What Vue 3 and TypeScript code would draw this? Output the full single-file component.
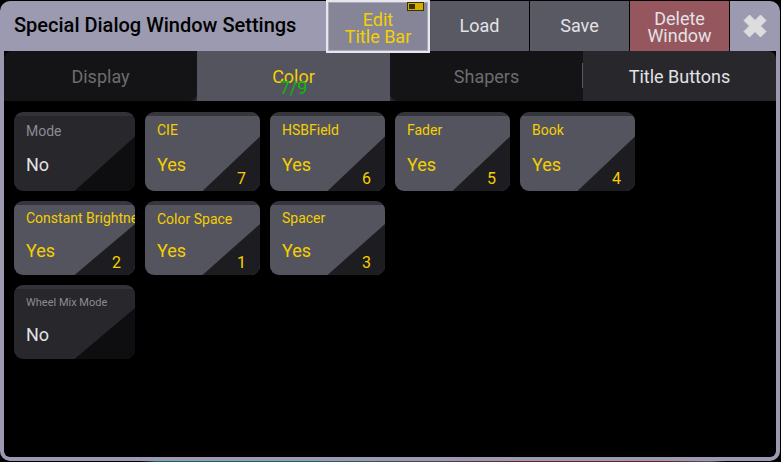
<script setup lang="ts">
import { ref } from 'vue'

interface Tab {
  label: string
  dim: boolean
  counter?: string
}

interface Setting {
  label: string
  on: boolean
  order?: number
  size?: 'medium' | 'small'
}

const tabs: Tab[] = [
  { label: 'Display', dim: true },
  { label: 'Color', dim: false, counter: '7/9' },
  { label: 'Shapers', dim: true },
  { label: 'Title Buttons', dim: false },
]
const activeTab = ref('Color')

const rows: Setting[][] = [
  [
    { label: 'Mode', on: false, size: 'medium' },
    { label: 'CIE', on: true, order: 7 },
    { label: 'HSBField', on: true, order: 6 },
    { label: 'Fader', on: true, order: 5 },
    { label: 'Book', on: true, order: 4 },
  ],
  [
    { label: 'Constant Brightness', on: true, order: 2 },
    { label: 'Color Space', on: true, order: 1, size: 'medium' },
    { label: 'Spacer', on: true, order: 3 },
  ],
  [{ label: 'Wheel Mix Mode', on: false, size: 'small' }],
]
</script>

<template>
  <div class="screen">
    <main class="dialog">
      <header class="titlebar">
        <h1 class="title">Special Dialog Window Settings</h1>
        <button type="button" class="action edit">
          <span>Edit<br />Title Bar</span>
          <svg class="indicator" viewBox="0 0 17 9" aria-hidden="true">
            <rect width="17" height="9" fill="#3a3000" />
            <rect x="1" y="1" width="15" height="7" fill="#d2ae00" />
            <rect x="2" y="2" width="6" height="5" fill="#3a3000" />
          </svg>
        </button>
        <button type="button" class="action">Load</button>
        <button type="button" class="action">Save</button>
        <button type="button" class="action delete">Delete<br />Window</button>
        <button type="button" class="close" aria-label="Close">
          <svg viewBox="0 0 24 24" aria-hidden="true">
            <path
              d="M6.5 1 L12 6.5 L17.5 1 L23 6.5 L17.5 12 L23 17.5 L17.5 23 L12 17.5 L6.5 23 L1 17.5 L6.5 12 L1 6.5 Z"
              fill="#dddddf"
              stroke="#dddddf"
              stroke-width="1"
              stroke-linejoin="round"
            />
          </svg>
        </button>
      </header>

      <nav class="tabs">
        <button
          v-for="tab in tabs"
          :key="tab.label"
          type="button"
          class="tab"
          :class="{ dim: tab.dim, active: tab.label === activeTab }"
          @click="activeTab = tab.label"
        >
          {{ tab.label }}
          <span v-if="tab.counter" class="counter">{{ tab.counter }}</span>
        </button>
      </nav>

      <section class="panel">
        <div v-for="(row, index) in rows" :key="index" class="row">
          <button
            v-for="item in row"
            :key="item.label"
            type="button"
            class="card"
            :class="[{ on: item.on }, item.size]"
          >
            <span class="label">{{ item.label }}</span>
            <span class="value">{{ item.on ? 'Yes' : 'No' }}</span>
            <span v-if="item.order" class="order">{{ item.order }}</span>
          </button>
        </div>
      </section>
    </main>
  </div>
</template>

<style>
body {
  background: #000;
}
</style>

<style scoped>
.screen {
  box-sizing: border-box;
  min-height: 100vh;
  display: flex;
  padding: 1px 1px 1px 0;
  font-family: Roboto, 'Liberation Sans', sans-serif;
  background:
    linear-gradient(90deg, #000 18%, #0b6668 20%, #176466 40%, #4b4548 54%, #6e2228 66%, #701c20 85%, #55505a 91%, #000 93%)
    bottom / 100% 1px no-repeat #000;
}

button {
  box-sizing: border-box;
  margin: 0;
  padding: 0;
  border: 0;
  font-family: inherit;
  color: inherit;
  cursor: pointer;
}

.dialog {
  flex: 1;
  min-width: 0;
  display: flex;
  flex-direction: column;
  padding: 0 4px 4px;
  border-radius: 10px;
  background: #9b9ab0;
  color: #e2e2e6;
}

.titlebar {
  display: flex;
  height: 50px;
}

.title {
  flex: 1;
  margin: 0;
  padding-left: 10px;
  font-size: 20px;
  font-weight: 500;
  line-height: 48px;
  white-space: nowrap;
  color: #000;
}

.action {
  width: 100px;
  padding-bottom: 2px;
  border-right: 1px solid #000;
  background: #595963;
  font-size: 18px;
  line-height: 17px;
}

.edit {
  position: relative;
  z-index: 1;
  width: 104px;
  margin: -1px 0 -2px;
  padding: 3px 0 0;
  border: 2px solid #e6e6ec;
  box-shadow: inset 0 0 0 1px #a9a9b8;
  background: #858597;
  color: #f5cf00;
}

.indicator {
  position: absolute;
  top: 0;
  right: 4px;
  width: 17px;
  height: 9px;
}

.delete {
  padding: 2px 0 0;
  background: #96565d;
}

.close {
  display: flex;
  align-items: center;
  justify-content: center;
  width: 46px;
  padding-left: 4px;
  background: none;
}

.close svg {
  width: 24px;
  height: 24px;
}

.tabs {
  display: grid;
  grid-template-columns: repeat(4, 1fr);
  background: linear-gradient(90deg, #000 5%, #27272c 5%, #27272c 90%, #000 90%);
}

.tab {
  position: relative;
  height: 50px;
  background: #27272c;
  font-size: 18px;
  line-height: 52px;
}

.tab.dim {
  background: #141416;
  color: #6c6c70;
}

.tab:first-child {
  border-radius: 8px 0 8px 0;
}

.tab:nth-child(3) {
  border-radius: 0 0 0 8px;
}

.tab:nth-child(3)::after {
  content: '';
  position: absolute;
  top: 12px;
  right: 0;
  width: 1px;
  height: 25px;
  background: #595963;
}

.tab:last-child {
  border-radius: 0 8px 0 0;
}

.tab.active {
  background: #54545f;
  color: #f5cf00;
}

.counter {
  position: absolute;
  inset: 24px 0 auto;
  font-size: 18px;
  line-height: 26px;
  color: #0cb80c;
}

.panel {
  flex: 1;
  display: flex;
  flex-direction: column;
  gap: 10px;
  padding: 11px 10px 10px;
  border-radius: 0 0 6px 6px;
  background: #000;
}

.row {
  display: grid;
  grid-template-columns: 121fr repeat(4, 115fr) 121fr;
  gap: 10px;
}

.card {
  position: relative;
  display: flex;
  flex-direction: column;
  align-items: flex-start;
  min-width: 0;
  height: 74px;
  padding: 8px 0 0 12px;
  overflow: hidden;
  border-radius: 9px;
  background: linear-gradient(#323238 4px, #27272c 4px);
  text-align: left;
  white-space: nowrap;
}

.card::after {
  content: '';
  position: absolute;
  inset: 0;
  background: #0e0e10;
  clip-path: polygon(50% 100%, 100% 31%, 100% 100%);
}

.card.on {
  background: linear-gradient(#35353c 4px, #54545f 4px);
  color: #f5cf00;
}

.card.on::after {
  background: #1d1d21;
}

.label {
  position: relative;
  z-index: 1;
  height: 18px;
  color: #8c8c90;
  font-size: 14px;
  line-height: 18px;
}

.on .label {
  color: inherit;
}

.medium .label {
  line-height: 20px;
}

.small .label {
  font-size: 11px;
  line-height: 20px;
}

.value {
  padding-top: 12px;
  font-size: 18px;
  line-height: 24px;
}

.order {
  position: absolute;
  z-index: 1;
  right: 14px;
  bottom: 2px;
  font-size: 16px;
  line-height: 20px;
}

.row:first-child .card {
  height: 79px;
  padding-top: 9px;
}

.row:first-child .value {
  padding-top: 14px;
}
</style>
